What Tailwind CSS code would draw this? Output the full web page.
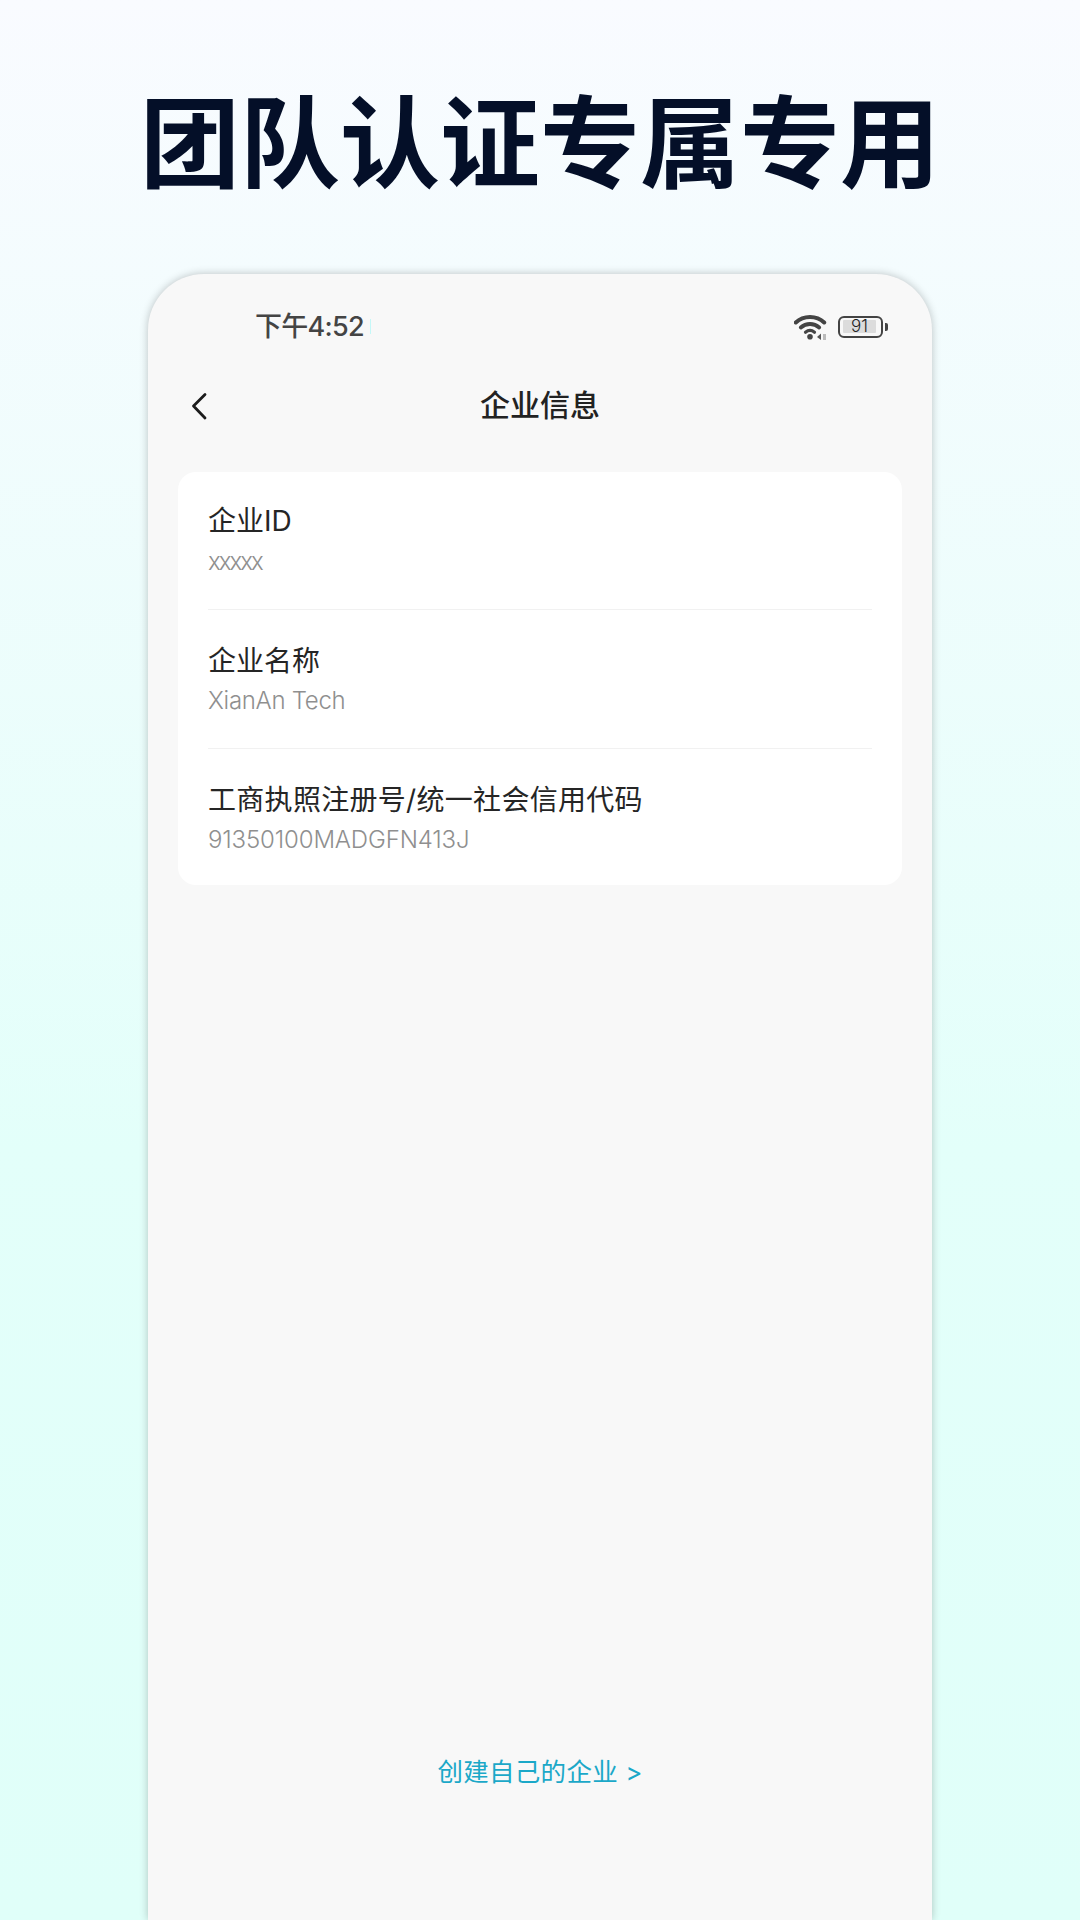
<!DOCTYPE html>
<html lang="zh-CN">

<head>
    <meta charset="UTF-8">
    <meta name="viewport" content="width=device-width, initial-scale=1.0">
    <title>企业信息</title>
    <script src="https://cdn.jsdelivr.net/npm/@tailwindcss/browser@4"></script>
</head>

<body class="m-0">
    <div class="w-[1080px] h-[1920px] overflow-hidden flex flex-col bg-gradient-to-b from-[#f9fbff] via-[#e3fffa] via-[60%] to-[#e0fff9] font-['Inter','Noto_Sans_CJK_SC',sans-serif]">
        <h1 class="h-[274px] pt-[72px] text-center text-[100px] leading-[130px] font-bold text-[#040f28] font-['Noto_Sans_CJK_SC',sans-serif]">团队认证专属专用</h1>

        <div class="flex-1 mx-[148px] flex flex-col bg-[#f8f8f8] rounded-t-[56px] shadow-[0_0_8px_rgba(0,0,0,0.24)]">
            <!-- status bar -->
            <div class="h-[104px] flex items-center justify-between pl-[107px] pr-[44px] pt-[1px]">
                <div class="flex items-center gap-[6px]">
                    <span class="text-[27px] leading-[36px] font-medium tracking-[-0.700px] text-[#444]">下午4:52</span>
                    <span class="w-px h-[15px] bg-[#c4f8f8]"></span>
                </div>
                <div class="flex items-center gap-[10px]">
                    <svg class="w-[34px] h-[26px]" viewBox="0 0 34 26" fill="none">
                        <path d="M1.800 8.500C9.500 1 22.500 1 30.200 8.500" stroke="#444" stroke-width="4" stroke-linecap="round"/>
                        <path d="M6.800 13.500C12 8.800 20 8.800 25.200 13.500" stroke="#444" stroke-width="3.800" stroke-linecap="round"/>
                        <path d="M11.500 18.200C14.200 16 17.800 16 20.500 18.200" stroke="#444" stroke-width="3.200" stroke-linecap="round"/>
                        <circle cx="16" cy="22.800" r="2.800" fill="#444"/>
                        <path d="M27 19.500L23 23L27 26Z" fill="#555"/>
                        <path d="M29 20H32V26H29Z" fill="#bbb"/>
                    </svg>
                    <div class="flex items-center gap-[2px]">
                        <div class="w-[45px] h-[22px] p-[3px] rounded-[6px] border-[2px] border-[#444] flex items-center">
                            <div class="w-[33px] h-[13px] bg-[#dcdcdc] flex items-center justify-center rounded-[1px]">
                                <span class="text-[17px] leading-[13px] font-light text-[#222]">91</span>
                            </div>
                        </div>
                        <div class="w-[3px] h-[8px] bg-[#444] rounded-r-[2px]"></div>
                    </div>
                </div>
            </div>

            <!-- nav -->
            <div class="relative h-[56px] flex items-center justify-center">
                <svg class="absolute left-[43px] top-[14px] w-[16px] h-[28px]" viewBox="0 0 16 28" fill="none">
                    <path d="M14 2.500L2.500 14L14 26" stroke="#1c1c1c" stroke-width="2.800" stroke-linecap="round" stroke-linejoin="round"/>
                </svg>
                <span class="-mt-[2px] text-[30px] leading-[40px] font-medium text-[#222]">企业信息</span>
            </div>

            <!-- info card -->
            <div class="mt-[38px] mx-[30px] px-[30px] bg-white rounded-[18px] flex flex-col">
                <div class="h-[138px] pt-[29px] border-b border-[#f1f1f1]">
                    <div class="text-[28px] leading-[40px] text-[#252525]">企业ID</div>
                    <div class="mt-[4px] text-[24px] leading-[34px] font-light tracking-[-2px] text-[#8f8f8f]">xxxxx</div>
                </div>
                <div class="h-[139px] pt-[31px] border-b border-[#f1f1f1]">
                    <div class="text-[28px] leading-[40px] text-[#252525]">企业名称</div>
                    <div class="mt-[3px] text-[24px] leading-[34px] font-light tracking-[-0.300px] text-[#8f8f8f]">XianAn Tech</div>
                </div>
                <div class="h-[136px] pt-[31px]">
                    <div class="text-[28px] leading-[40px] tracking-[0.300px] text-[#252525]">工商执照注册号/统一社会信用代码</div>
                    <div class="mt-[3px] text-[24px] leading-[34px] font-light tracking-[-0.150px] text-[#8f8f8f]">91350100MADGFN413J</div>
                </div>
            </div>

            <a class="mt-[869px] text-center text-[25.500px] leading-[36px] tracking-[0.300px] text-[#1ba8c8]">创建自己的企业 &gt;</a>
        </div>
    </div>
</body>

</html>
